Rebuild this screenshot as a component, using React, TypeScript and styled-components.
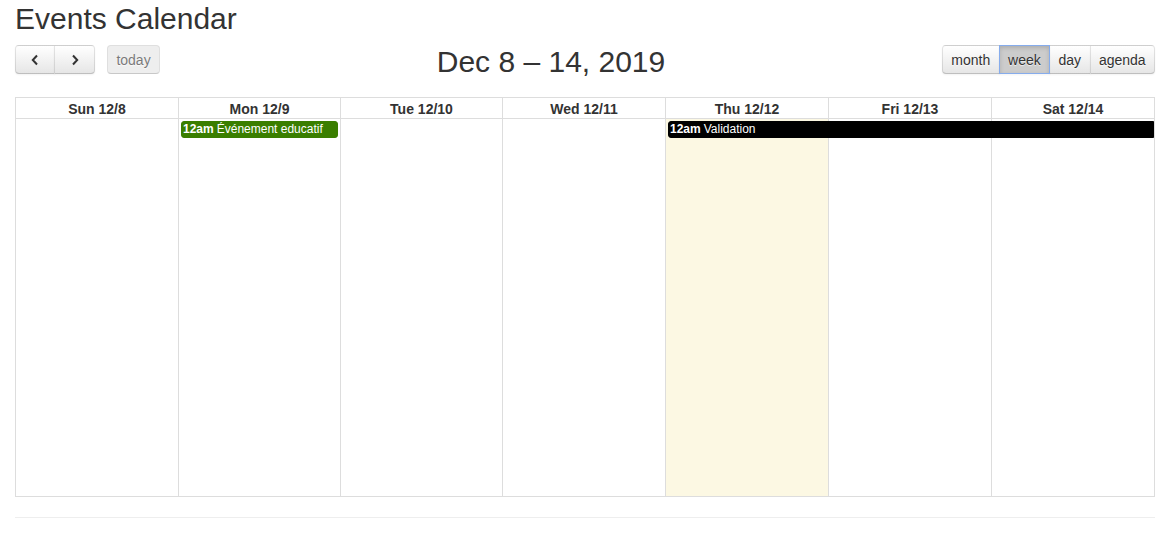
import React from "react";
import styled, { createGlobalStyle, css } from "styled-components";

const Global = createGlobalStyle`
  html, body { margin: 0; padding: 0; background: #fff; }
  body {
    font-family: "Liberation Sans", Arial, Helvetica, sans-serif;
    font-size: 14px;
    color: #333;
  }
  * { box-sizing: border-box; }
`;

const Page = styled.div`
  padding: 0 13px 0 15px;
  width: 1168px;
`;

const PageTitle = styled.h1`
  margin: 2px 0 0;
  font-size: 30px;
  line-height: 33px;
  font-weight: 400;
  color: #333;
`;

const Toolbar = styled.div`
  display: flex;
  align-items: flex-start;
  margin-top: 10px;
  height: 33px;
  margin-bottom: 19px;
  width: 1140px;
`;

const Left = styled.div`
  display: flex;
  align-items: center;
  gap: 12px;
`;

const Group = styled.div`
  display: flex;
`;

const ViewTitle = styled.h2`
  flex: 1;
  margin: 0;
  text-align: center;
  font-size: 30px;
  line-height: 33px;
  font-weight: 400;
  color: #333;
`;

const Button = styled.button<{ $pos?: "left" | "mid" | "right" | "solo"; $active?: boolean; $disabled?: boolean; $w?: number }>`
  height: 29px;
  padding: 0 8.4px;
  margin: 0;
  font-family: inherit;
  font-size: 14px;
  color: #333;
  cursor: pointer;
  display: flex;
  align-items: center;
  justify-content: center;
  ${(p) => p.$w && css`width: ${p.$w}px;`}
  background: linear-gradient(#ffffff, #e6e6e6);
  border: 1px solid;
  border-color: rgba(0,0,0,.1) rgba(0,0,0,.1) rgba(0,0,0,.25);
  box-shadow: inset 0 1px 0 rgba(255,255,255,.2), 0 1px 2px rgba(0,0,0,.05);
  text-shadow: 0 1px 1px rgba(255,255,255,.75);
  border-radius: ${(p) =>
    p.$pos === "left" ? "4px 0 0 4px" : p.$pos === "right" ? "0 4px 4px 0" : p.$pos === "mid" ? "0" : "4px"};
  ${(p) => p.$pos === "mid" || p.$pos === "right" ? css`margin-left: -1px;` : ""}
  ${(p) =>
    p.$active &&
    css`
      background: #cccccc;
      border-color: #86acec;
      box-shadow: inset 0 2px 4px rgba(0,0,0,.15), 0 1px 2px rgba(0,0,0,.05);
      position: relative;
      z-index: 1;
    `}
  ${(p) =>
    p.$disabled &&
    css`
      opacity: .65;
      box-shadow: none;
      background: #e6e6e6;
      cursor: default;
    `}
`;

const Calendar = styled.div`
  border: 1px solid #ddd;
  width: 1140px;
`;

const columns = "162px 162px 162px 163px 163px 163px 163px";

const HeadRow = styled.div`
  display: grid;
  grid-template-columns: ${columns};
  border-bottom: 1px solid #ddd;
`;

const HeadCell = styled.div<{ $first?: boolean }>`
  text-align: center;
  font-weight: 700;
  font-size: 14px;
  line-height: 16px;
  padding-top: 3px;
  height: 20px;
  color: #333;
  ${(p) => !p.$first && css`border-left: 1px solid #ddd;`}
`;

const Body = styled.div`
  display: grid;
  grid-template-columns: ${columns};
  grid-template-rows: auto 1fr;
  height: 377px;
`;

const DayBg = styled.div<{ $col: number; $today?: boolean }>`
  grid-column: ${(p) => p.$col};
  grid-row: 1 / 3;
  ${(p) => p.$col > 1 && css`border-left: 1px solid #ddd;`}
  background: ${(p) => (p.$today ? "#fcf8e3" : "#fff")};
`;

const Event = styled.div<{ $start: number; $end: number; $bg: string; $continues?: boolean }>`
  grid-column: ${(p) => `${p.$start} / ${p.$end}`};
  grid-row: 1;
  position: relative;
  z-index: 1;
  margin: 2px ${(p) => (p.$continues ? "0" : "2px")} 0 ${(p) => (p.$start > 1 ? "3px" : "2px")};
  background: ${(p) => p.$bg};
  border: 1px solid ${(p) => p.$bg};
  border-radius: ${(p) => (p.$continues ? "3px 0 0 3px" : "3px")};
  color: #fff;
  font-size: 12px;
  line-height: 15px;
  padding: 0 1px;
  white-space: nowrap;
  overflow: hidden;
`;

const Time = styled.span`
  font-weight: 700;
  margin-right: 3px;
`;

const Rule = styled.hr`
  margin: 20px 0 0;
  border: 0;
  border-top: 1px solid #eee;
  width: 1140px;
`;

const Chevron = ({ dir }: { dir: "left" | "right" }) => (
  <svg width="10" height="12" viewBox="0 0 10 12">
    <path
      d={dir === "left" ? "M7 1.5 L2.8 6 L7 10.5" : "M3 1.5 L7.2 6 L3 10.5"}
      fill="none"
      stroke="#333"
      strokeWidth="2"
    />
  </svg>
);

const days = ["Sun 12/8", "Mon 12/9", "Tue 12/10", "Wed 12/11", "Thu 12/12", "Fri 12/13", "Sat 12/14"];

export default function App() {
  return (
    <Page>
      <Global />
      <PageTitle>Events Calendar</PageTitle>
      <Toolbar>
        <Left>
          <Group>
            <Button $pos="left" $w={40} aria-label="prev"><Chevron dir="left" /></Button>
            <Button $pos="right" $w={41} aria-label="next"><Chevron dir="right" /></Button>
          </Group>
          <Button $pos="solo" $disabled>today</Button>
        </Left>
        <ViewTitle>Dec 8 – 14, 2019</ViewTitle>
        <Group>
          <Button $pos="left">month</Button>
          <Button $pos="mid" $active>week</Button>
          <Button $pos="mid">day</Button>
          <Button $pos="right">agenda</Button>
        </Group>
      </Toolbar>
      <Calendar>
        <HeadRow>
          {days.map((d, i) => (
            <HeadCell key={d} $first={i === 0}>{d}</HeadCell>
          ))}
        </HeadRow>
        <Body>
          {days.map((d, i) => (
            <DayBg key={d} $col={i + 1} $today={i === 4} />
          ))}
          <Event $start={2} $end={3} $bg="#3a7e00">
            <Time>12am</Time>Événement educatif
          </Event>
          <Event $start={5} $end={8} $bg="#000" $continues>
            <Time>12am</Time>Validation
          </Event>
        </Body>
      </Calendar>
      <Rule />
    </Page>
  );
}
